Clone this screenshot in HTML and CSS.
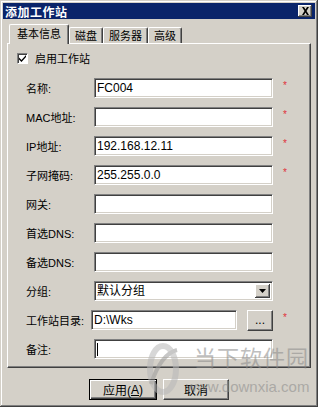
FILE: index.html
```html
<!DOCTYPE html>
<html lang="zh-CN">
<head>
  <meta charset="UTF-8">
  <title>添加工作站</title>
  <link rel="stylesheet" href="styles.css">
</head>
<body>

  <div class="window">
    <div class="titlebar">
      <span class="title">添加工作站</span>
      <span class="close">
        <svg width="9" height="8" viewBox="0 0 9 8"><path d="M1 0h2l1.5 2.5L6 0h2L5.5 4 8 8H6L4.5 5.5 3 8H1l2.5-4z" fill="#000"/></svg>
      </span>
    </div>

    <div class="tabs">
      <div class="tab active">基本信息</div>
      <div class="tab">磁盘</div>
      <div class="tab">服务器</div>
      <div class="tab">高级</div>
    </div>

    <div class="panel">
      <label class="check">
        <span class="box">
          <svg width="7" height="7" viewBox="0 0 7 7"><path d="M0 2.5l2.5 2.5L7 0v2L2.5 7 0 4.5z" fill="#000"/></svg>
        </span>
        启用工作站
      </label>

      <div class="form">
        <span class="label">名称:</span>
        <div class="field">FC004</div>
        <span class="req">*</span>

        <span class="label">MAC地址:</span>
        <div class="field"></div>
        <span class="req">*</span>

        <span class="label">IP地址:</span>
        <div class="field">192.168.12.11</div>
        <span class="req">*</span>

        <span class="label">子网掩码:</span>
        <div class="field">255.255.0.0</div>
        <span class="req">*</span>

        <span class="label">网关:</span>
        <div class="field"></div>
        <span></span>

        <span class="label">首选DNS:</span>
        <div class="field"></div>
        <span></span>

        <span class="label">备选DNS:</span>
        <div class="field"></div>
        <span></span>

        <span class="label">分组:</span>
        <div class="field select">
          <span>默认分组</span>
          <span class="drop"><svg width="7" height="4" viewBox="0 0 7 4"><path d="M0 0h7L3.5 4z" fill="#000"/></svg></span>
        </div>
        <span></span>

        <span class="label">工作站目录:</span>
        <div class="dir-row">
          <div class="field dir">D:\Wks</div>
          <div class="btn small">...</div>
        </div>
        <span class="req">*</span>

        <span class="label">备注:</span>
        <div class="field"><span class="caret"></span></div>
        <span></span>
      </div>
    </div>

    <div class="actions">
      <div class="btn default">应用(<u>A</u>)</div>
      <div class="btn">取消</div>
    </div>

    <!-- watermark -->
    <div class="watermark">
      <svg class="wm-logo" width="34" height="54" viewBox="0 0 34 54">
        <ellipse cx="17" cy="27" rx="13" ry="23" fill="none" stroke="#b8b8b8" stroke-width="6"/>
        <path d="M5 42 Q15 12 31 8" fill="none" stroke="#9a9a9a" stroke-width="4"/>
      </svg>
      <div class="wm-text">
        <div class="wm-name">当下软件园</div>
        <div class="wm-url">www.downxia.com</div>
      </div>
    </div>
  </div>

</body>
</html>
```

FILE: styles.css
```css
body {
  margin: 0;
  background: #fff;
  font-family: "Liberation Sans", "Noto Sans CJK SC", sans-serif;
  font-size: 11px;
  color: #000;
}
.window {
  position: relative;
  width: 318px;
  height: 407px;
  box-sizing: border-box;
  padding: 3px;
  background: #d4d0c8;
  box-shadow: inset -1px -1px #404040, inset 1px 1px #d4d0c8, inset -2px -2px #808080, inset 2px 2px #fff;
  display: flex;
  flex-direction: column;
}
.titlebar {
  height: 16px;
  background: #0a246a;
  display: flex;
  align-items: center;
  justify-content: space-between;
  padding: 0 3px 0 2px;
}
.title {
  color: #fff;
  font-weight: bold;
  font-size: 12px;
  letter-spacing: 0.5px;
}
.close {
  width: 14px;
  height: 12px;
  box-sizing: border-box;
  background: #d4d0c8;
  display: flex;
  align-items: center;
  justify-content: center;
  box-shadow: inset -1px -1px #404040, inset 1px 1px #fff, inset -2px -2px #808080;
}
.tabs {
  display: flex;
  align-items: flex-end;
  height: 19px;
  margin: 5px 4px 0 6px;
  position: relative;
  z-index: 1;
}
.tab {
  height: 16px;
  box-sizing: border-box;
  padding: 1px 5px 0;
  border-top: 1px solid #fff;
  border-left: 1px solid #fff;
  border-right: 1px solid #404040;
  box-shadow: inset -1px 0 #808080;
  border-radius: 2px 2px 0 0;
  line-height: 14px;
}
.tab.active {
  height: 20px;
  margin-bottom: -1px;
  padding: 2px 7px 0;
  background: #d4d0c8;
  line-height: 15px;
}
.panel {
  margin: 0 4px;
  padding: 8px 0 8px 9px;
  border-top: 1px solid #fff;
  border-left: 1px solid #fff;
  border-right: 1px solid #404040;
  border-bottom: 1px solid #404040;
  box-shadow: inset -1px -1px #808080;
}
.check {
  display: flex;
  align-items: center;
  gap: 7px;
  height: 12px;
}
.box {
  width: 11px;
  height: 11px;
  box-sizing: border-box;
  background: #fff;
  border: 1px solid;
  border-color: #808080 #fff #fff #808080;
  box-shadow: inset 1px 1px #404040;
  display: flex;
  align-items: center;
  justify-content: center;
}
.form {
  display: grid;
  grid-template-columns: 58px 179px 16px;
  grid-auto-rows: 20px;
  row-gap: 9px;
  column-gap: 10px;
  margin: 14px 0 0 9px;
  align-items: center;
}
.label {
  white-space: nowrap;
}
.field {
  height: 20px;
  box-sizing: border-box;
  background: #fff;
  border: 1px solid;
  border-color: #808080 #fff #fff #808080;
  box-shadow: inset 1px 1px #404040, inset -1px -1px #d4d0c8;
  padding: 1px 2px 0;
  line-height: 17px;
  font-size: 12px;
}
.select {
  display: flex;
  justify-content: space-between;
  padding-right: 2px;
}
.drop {
  width: 15px;
  height: 14px;
  margin-top: 1px;
  background: #d4d0c8;
  box-shadow: inset -1px -1px #404040, inset 1px 1px #fff, inset -2px -2px #808080;
  display: flex;
  align-items: center;
  justify-content: center;
}
.dir-row {
  display: flex;
  gap: 10px;
  margin-left: -3px;
}
.dir {
  width: 146px;
}
.caret {
  display: inline-block;
  width: 1px;
  height: 13px;
  margin-top: 2px;
  background: #000;
    vertical-align: top;
}
.req {
  color: #e0303a;
  font-size: 10px;
  align-self: start;
  line-height: 10px;
  margin-top: 3px;
}
.btn {
  box-sizing: border-box;
  height: 21px;
  background: #d4d0c8;
  border: 1px solid;
  border-color: #fff #404040 #404040 #fff;
  box-shadow: inset -1px -1px #808080;
  display: flex;
  align-items: center;
  justify-content: center;
  font-size: 12px;
}
.btn.small {
  width: 26px;
  height: 21px;
  line-height: 1;
}
.actions {
  display: flex;
  justify-content: center;
  gap: 6px;
  margin-top: 11px;
}
.actions .btn {
  width: 66px;
}
.actions .btn.default {
  width: 68px;
  outline: 1px solid #000;
  outline-offset: -1px;
  border-color: #000;
  box-shadow: inset 1px 1px #fff, inset -1px -1px #404040, inset -2px -2px #808080;
}
.watermark {
  position: absolute;
  left: 146px;
  top: 342px;
  display: flex;
  gap: 6px;
  opacity: 0.55;
  pointer-events: none;
}
.wm-name {
  font-family: "Noto Sans CJK SC", sans-serif;
  font-size: 22px;
  line-height: 28px;
  color: #8a8a8a;
  letter-spacing: 1px;
  margin-left: 8px;
}
.wm-url {
  font-family: "Liberation Sans", sans-serif;
  font-size: 15px;
  color: #8a8a8a;
  margin-top: 8px;
}
```
